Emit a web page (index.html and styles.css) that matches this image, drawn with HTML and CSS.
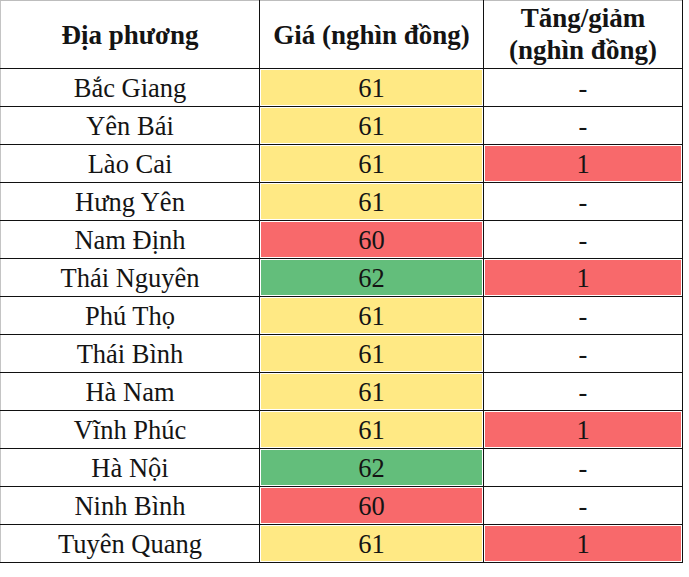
FILE: index.html
```html
<!DOCTYPE html>
<html lang="vi">
<head>
<meta charset="utf-8">
<title>Giá</title>
<link rel="stylesheet" href="styles.css">
</head>
<body>
<table class="price-table">
  <colgroup>
    <col class="c1"><col class="c2"><col class="c3">
  </colgroup>
  <thead>
    <tr>
      <th>Địa phương</th>
      <th>Giá (nghìn đồng)</th>
      <th class="two">Tăng/giảm<br>(nghìn đồng)</th>
    </tr>
  </thead>
  <tbody>
    <tr><td>Bắc Giang</td><td class="y">61</td><td>-</td></tr>
    <tr><td>Yên Bái</td><td class="y">61</td><td>-</td></tr>
    <tr><td>Lào Cai</td><td class="y">61</td><td class="r">1</td></tr>
    <tr><td>Hưng Yên</td><td class="y">61</td><td>-</td></tr>
    <tr><td>Nam Định</td><td class="r">60</td><td>-</td></tr>
    <tr><td>Thái Nguyên</td><td class="g">62</td><td class="r">1</td></tr>
    <tr><td>Phú Thọ</td><td class="y">61</td><td>-</td></tr>
    <tr><td>Thái Bình</td><td class="y">61</td><td>-</td></tr>
    <tr><td>Hà Nam</td><td class="y">61</td><td>-</td></tr>
    <tr><td>Vĩnh Phúc</td><td class="y">61</td><td class="r">1</td></tr>
    <tr><td>Hà Nội</td><td class="g">62</td><td>-</td></tr>
    <tr><td>Ninh Bình</td><td class="r">60</td><td>-</td></tr>
    <tr><td>Tuyên Quang</td><td class="y">61</td><td class="r">1</td></tr>
  </tbody>
</table>
</body>
</html>
```

FILE: styles.css
```css
html, body {
  margin: 0;
  padding: 0;
  background: #fff;
}

.price-table {
  border-collapse: collapse;
  table-layout: fixed;
  width: 682px;
  color: #141414;
}

.price-table th,
.price-table td {
  font-family: "Liberation Serif", "Times New Roman", "DejaVu Serif", serif;
  border: 1px solid #111;
  text-align: center;
  vertical-align: middle;
  padding: 0;
}

.c1 { width: 259px; }
.c2 { width: 224px; }
.c3 { width: 199px; }

.price-table th {
  height: 65px;
  font-size: 27px;
  font-weight: bold;
  border-top-color: #bdbdbd;
  line-height: 32px;
}

.price-table th.two {
  padding-bottom: 2px;
}

.price-table tr > :first-child {
  border-left-color: #c4c4c4;
}

.price-table td {
  height: 37px;
  font-size: 26.5px;
  line-height: 30px;
}

.price-table td.y {
  background: #ffe984;
  box-shadow: inset 0 0 0 1px #fff;
}

.price-table td.r {
  background: #f8696b;
  box-shadow: inset 0 0 0 1px #fff;
}

.price-table td.g {
  background: #63be7b;
  box-shadow: inset 0 0 0 1px #fff;
}
```
